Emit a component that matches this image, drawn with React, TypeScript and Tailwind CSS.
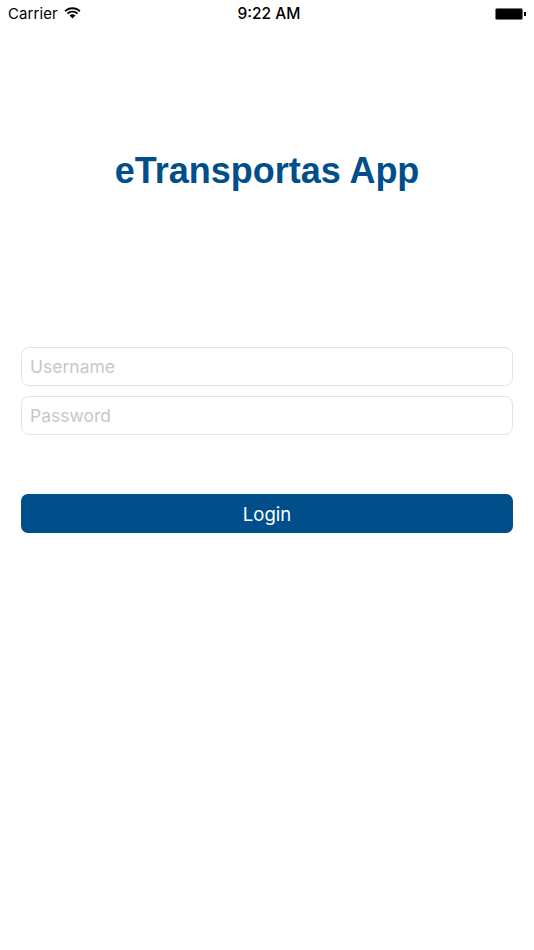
import React from "react";

const WifiIcon = () => (
  <svg width="17" height="12" viewBox="0 0 17 12" fill="#000">
    <path d="M8.5 2.2c2.6 0 5 1 6.8 2.7l1.2-1.3C14.4 1.5 11.6.3 8.5.3S2.6 1.5.5 3.6l1.2 1.3C3.5 3.2 5.9 2.2 8.5 2.2z" />
    <path d="M8.5 5.6c1.7 0 3.2.6 4.4 1.7l1.2-1.3C12.6 4.6 10.6 3.8 8.5 3.8S4.4 4.6 2.9 6l1.2 1.3c1.2-1.1 2.7-1.7 4.4-1.7z" />
    <path d="M8.5 7.3c-1.1 0-2.1.4-2.9 1.1l2.9 3.2 2.9-3.2c-.8-.7-1.8-1.1-2.9-1.1z" />
  </svg>
);

const StatusBar = () => (
  <div className="grid grid-cols-3 items-center h-7 px-2 text-black font-['Inter',sans-serif]">
    <div className="flex items-center gap-[6px] text-[15px]">
      <span className="tracking-[0.1px]">Carrier</span>
      <span className="-mt-[2px]">
        <WifiIcon />
      </span>
    </div>
    <div className="text-center text-[15.5px] font-medium whitespace-nowrap pl-[4px]">9:22 AM</div>
    <div className="flex justify-end items-center">
      <div className="w-[28px] h-[12px] bg-black border border-[#777] rounded-[2px]" />
      <div className="w-[2px] h-[4px] bg-black ml-[1px]" />
    </div>
  </div>
);

export default function App() {
  return (
    <div className="min-h-[950px] bg-white font-['Inter',sans-serif]">
      <StatusBar />
      <h1 className="mt-[119px] text-center text-[36px] leading-[48px] font-bold text-[#004f8b] font-['Liberation_Sans',sans-serif]">
        eTransportas App
      </h1>
      <form className="mt-[152px] px-[21px] flex flex-col">
        <input
          placeholder="Username"
          className="h-[39px] px-[8px] rounded-[8px] border border-[#e4e4e7] text-[17.5px] placeholder:text-[#c7c7cd] outline-none"
        />
        <input
          type="password"
          placeholder="Password"
          className="h-[39px] mt-[10px] px-[8px] rounded-[8px] border border-[#e4e4e7] text-[17.5px] placeholder:text-[#c7c7cd] outline-none"
        />
        <button
          type="button"
          className="h-[39px] mt-[59px] pt-[2px] rounded-[7px] bg-[#004f8b] text-white text-[18.5px]"
        >
          Login
        </button>
      </form>
    </div>
  );
}
